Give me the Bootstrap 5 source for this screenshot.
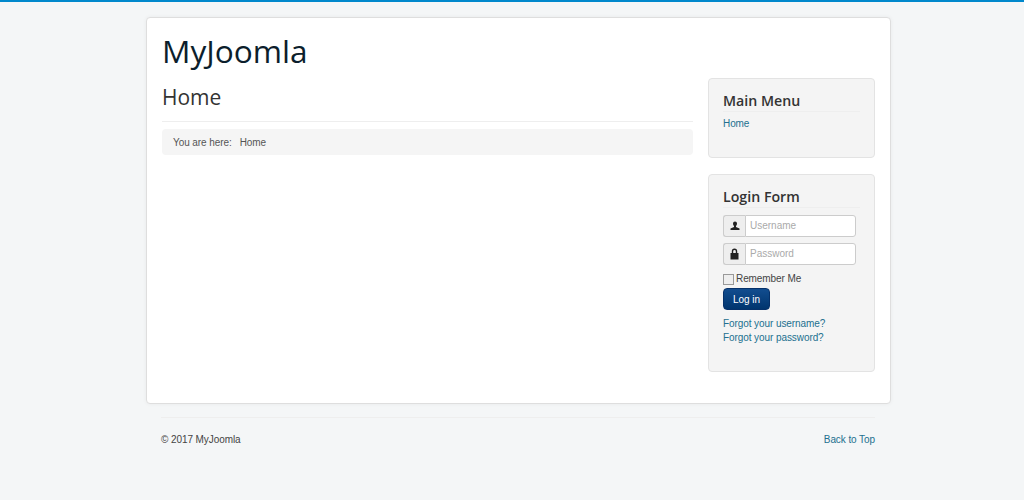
<!DOCTYPE html>
<html lang="en"><head><meta charset="utf-8"><title>MyJoomla</title>
<link rel="stylesheet" href="https://cdn.jsdelivr.net/npm/bootstrap@5.3.0/dist/css/bootstrap.min.css">
<style>
html,body{height:500px;overflow:hidden}
body{background:#f4f6f7;border-top:2px solid #0088cc;font:10px/18px "Liberation Sans",Arial,sans-serif;letter-spacing:-.08px;color:#444}
a{color:#22708f;text-decoration:none}
.shell{width:745px;margin:15px 0 0 146px}
.sheet{background:#fff;border:1px solid #dedede;border-radius:4px;padding:15px;height:387px;box-shadow:0 0 4px rgba(0,0,0,.05)}
.brand{font:400 31.6px/36px "Open Sans",sans-serif;letter-spacing:0;color:#0c1e2c;margin:0 0 9px}
.maincol{width:531px}
.sidecol{width:167px}
.pagehead{font:500 21px/26px "Open Sans",sans-serif;letter-spacing:0;color:#333;margin:0;padding:6px 0 10px;border-bottom:1px solid #eee;height:44px}
.crumbs{margin-top:7px;height:26px;background:#f5f5f5;border-radius:4px;padding:5px 11px 4px;color:#555;gap:8px}
.panel{background:#f4f4f4;border:1px solid #e3e3e3;border-radius:4px;padding:12px 14px;margin-bottom:16px}
.panelh{font:600 14.2px/19px "Open Sans",sans-serif;letter-spacing:0;color:#333;margin:0 0 3px;padding-bottom:1px;border-bottom:1px solid #eee}
.p1{height:80px}.p2{height:198px}
.field{width:133px;height:22px;margin-bottom:6px}
.addon{width:22px;background:#eee;border:1px solid #ccc;border-right:0;border-radius:3px 0 0 3px}
.field input{flex:1;min-width:0;border:1px solid #ccc;border-radius:0 3px 3px 0;padding:2px 4px;font-size:10px;background:#fff}
.field input::placeholder{color:#aaa}
.tick{width:11px;height:11px;margin:0;border:1px solid #999;background:#eee;appearance:none}
.loginbtn{display:block;background:linear-gradient(#124d8f,#00356e);color:#fff;border:1px solid #06316a;border-radius:4px;font-size:10px;line-height:16px;padding:3px 0 1px;height:22px;width:47px;white-space:nowrap}
.foot{margin:13px 16px 0 15px;border-top:1px solid #eee;padding-top:13px}
.rowgap{margin-top:-1px;margin-bottom:0;gap:2px}
.forgot{line-height:14px;margin-top:7px}
.firstfield{margin-top:7px}
</style></head><body>
<div class="shell">
<div class="sheet">
<h1 class="brand">MyJoomla</h1>
<div class="d-flex justify-content-between">
<div class="maincol">
<h2 class="pagehead">Home</h2>
<div class="crumbs d-flex"><span>You are here:</span><span>Home</span></div>
</div>
<div class="sidecol">
<div class="panel p1"><h3 class="panelh">Main Menu</h3><a href="#">Home</a></div>
<div class="panel p2"><h3 class="panelh">Login Form</h3>
<div class="field firstfield d-flex"><span class="addon d-flex align-items-center justify-content-center"><svg width="10" height="10" viewBox="0 0 10 10"><path fill="#222" d="M3 2.500a2 2 0 0 1 4 0c0 1.200-.5 2-1 2.600v.9l3.500 1.600V9H.5V7.600L4 6v-.9C3.500 4.500 3 3.700 3 2.500z"/></svg></span><input type="text" placeholder="Username"></div>
<div class="field d-flex"><span class="addon d-flex align-items-center justify-content-center"><svg width="9" height="12" viewBox="0 0 9 12"><path fill="#222" d="M1.800 5V3.200a2.700 2.700 0 0 1 5.400 0V5H8.500V11.500H.5V5zM3.200 5h2.600V3.200a1.300 1.300 0 0 0-2.600 0z"/></svg></span><input type="password" placeholder="Password"></div>
<div class="d-flex align-items-center rowgap"><input class="tick" type="checkbox"><span>Remember Me</span></div>
<button class="loginbtn" type="button">Log in</button>
<div class="forgot"><a href="#" class="d-block">Forgot your username?</a><a href="#" class="d-block">Forgot your password?</a></div>
</div>
</div>
</div>
</div>
<div class="foot d-flex justify-content-between"><span>© 2017 MyJoomla</span><a href="#">Back to Top</a></div>
</div>
<script src="https://cdn.jsdelivr.net/npm/bootstrap@5.3.0/dist/js/bootstrap.bundle.min.js"></script>
</body></html>
